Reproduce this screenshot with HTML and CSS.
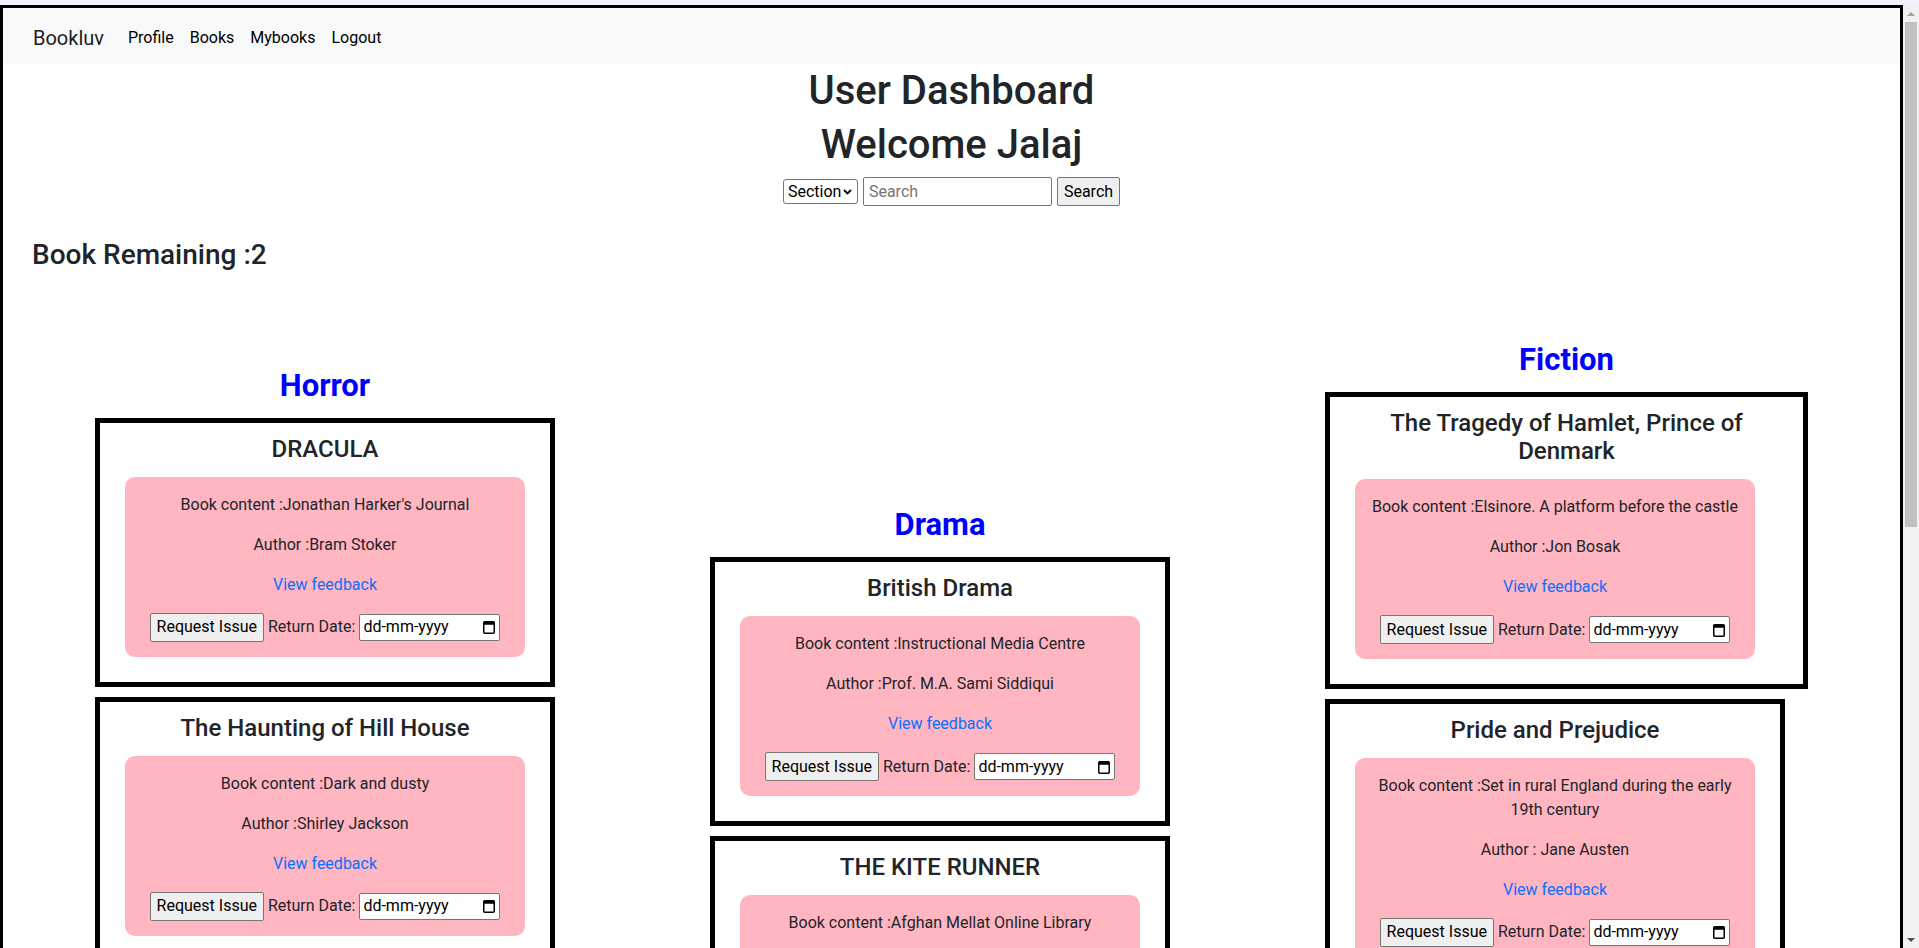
FILE: index.html
```html
<!DOCTYPE html>
<html lang="en">
<head>
<meta charset="utf-8">
<title>User Dashboard</title>
<link rel="stylesheet" href="styles.css">
</head>
<body>
<nav class="navbar">
  <a class="brand" href="#">Bookluv</a>
  <ul class="nav-links">
    <li><a href="#">Profile</a></li>
    <li><a href="#">Books</a></li>
    <li><a href="#">Mybooks</a></li>
    <li><a href="#">Logout</a></li>
  </ul>
</nav>

<header class="dash-head">
  <h1 class="dash-title">User Dashboard</h1>
  <h1 class="dash-welcome">Welcome Jalaj</h1>
  <form class="search">
    <select class="search-select"><option>Section</option><option>Title</option><option>Author</option></select>
    <input class="search-input" type="text" placeholder="Search">
    <button class="btn" type="button">Search</button>
  </form>
</header>

<h3 class="remaining">Book Remaining :2</h3>

<div class="sections">
  <section class="col">
    <h2 class="col-title">Horror</h2>
    <div class="card">
      <h4 class="card-title">DRACULA</h4>
      <div class="info">
        <p>Book content :Jonathan Harker's Journal</p>
        <p>Author :Bram Stoker</p>
        <p><a class="link" href="#">View feedback</a></p>
        <div class="issue"><button class="btn" type="button">Request Issue</button><span class="lbl">Return Date:</span><span class="date"><span>dd-mm-yyyy</span><svg class="cal" width="12" height="14" viewBox="0 0 12 14" aria-hidden="true"><rect x="0.75" y="1.75" width="10.5" height="11.5" rx="1" fill="none" stroke="#000" stroke-width="1.5"/><rect x="0.75" y="1.75" width="10.5" height="3" fill="#000"/></svg></span></div>
      </div>
    </div>
    <div class="card">
      <h4 class="card-title">The Haunting of Hill House</h4>
      <div class="info">
        <p>Book content :Dark and dusty</p>
        <p>Author :Shirley Jackson</p>
        <p><a class="link" href="#">View feedback</a></p>
        <div class="issue"><button class="btn" type="button">Request Issue</button><span class="lbl">Return Date:</span><span class="date"><span>dd-mm-yyyy</span><svg class="cal" width="12" height="14" viewBox="0 0 12 14" aria-hidden="true"><rect x="0.75" y="1.75" width="10.5" height="11.5" rx="1" fill="none" stroke="#000" stroke-width="1.5"/><rect x="0.75" y="1.75" width="10.5" height="3" fill="#000"/></svg></span></div>
      </div>
    </div>
    <div class="card">
      <h4 class="card-title">FRANKENSTEIN</h4>
      <div class="info">
        <p>Book content :Letters to Mrs. Saville</p>
        <p>Author :Mary Shelley</p>
        <p><a class="link" href="#">View feedback</a></p>
        <div class="issue"><button class="btn" type="button">Request Issue</button><span class="lbl">Return Date:</span><span class="date"><span>dd-mm-yyyy</span><svg class="cal" width="12" height="14" viewBox="0 0 12 14" aria-hidden="true"><rect x="0.75" y="1.75" width="10.5" height="11.5" rx="1" fill="none" stroke="#000" stroke-width="1.5"/><rect x="0.75" y="1.75" width="10.5" height="3" fill="#000"/></svg></span></div>
      </div>
    </div>
    <div class="card">
      <h4 class="card-title">The Shining</h4>
      <div class="info">
        <p>Book content :The Overlook Hotel</p>
        <p>Author :Stephen King</p>
        <p><a class="link" href="#">View feedback</a></p>
        <div class="issue"><button class="btn" type="button">Request Issue</button><span class="lbl">Return Date:</span><span class="date"><span>dd-mm-yyyy</span><svg class="cal" width="12" height="14" viewBox="0 0 12 14" aria-hidden="true"><rect x="0.75" y="1.75" width="10.5" height="11.5" rx="1" fill="none" stroke="#000" stroke-width="1.5"/><rect x="0.75" y="1.75" width="10.5" height="3" fill="#000"/></svg></span></div>
      </div>
    </div>
  </section>

  <section class="col">
    <h2 class="col-title">Drama</h2>
    <div class="card">
      <h4 class="card-title">British Drama</h4>
      <div class="info">
        <p>Book content :Instructional Media Centre</p>
        <p>Author :Prof. M.A. Sami Siddiqui</p>
        <p><a class="link" href="#">View feedback</a></p>
        <div class="issue"><button class="btn" type="button">Request Issue</button><span class="lbl">Return Date:</span><span class="date"><span>dd-mm-yyyy</span><svg class="cal" width="12" height="14" viewBox="0 0 12 14" aria-hidden="true"><rect x="0.75" y="1.75" width="10.5" height="11.5" rx="1" fill="none" stroke="#000" stroke-width="1.5"/><rect x="0.75" y="1.75" width="10.5" height="3" fill="#000"/></svg></span></div>
      </div>
    </div>
    <div class="card">
      <h4 class="card-title">THE KITE RUNNER</h4>
      <div class="info">
        <p>Book content :Afghan Mellat Online Library</p>
        <p>Author :Khaled Hosseini</p>
        <p><a class="link" href="#">View feedback</a></p>
        <div class="issue"><button class="btn" type="button">Request Issue</button><span class="lbl">Return Date:</span><span class="date"><span>dd-mm-yyyy</span><svg class="cal" width="12" height="14" viewBox="0 0 12 14" aria-hidden="true"><rect x="0.75" y="1.75" width="10.5" height="11.5" rx="1" fill="none" stroke="#000" stroke-width="1.5"/><rect x="0.75" y="1.75" width="10.5" height="3" fill="#000"/></svg></span></div>
      </div>
    </div>
    <div class="card">
      <h4 class="card-title">Death of a Salesman</h4>
      <div class="info">
        <p>Book content :Certain private conversations</p>
        <p>Author :Arthur Miller</p>
        <p><a class="link" href="#">View feedback</a></p>
        <div class="issue"><button class="btn" type="button">Request Issue</button><span class="lbl">Return Date:</span><span class="date"><span>dd-mm-yyyy</span><svg class="cal" width="12" height="14" viewBox="0 0 12 14" aria-hidden="true"><rect x="0.75" y="1.75" width="10.5" height="11.5" rx="1" fill="none" stroke="#000" stroke-width="1.5"/><rect x="0.75" y="1.75" width="10.5" height="3" fill="#000"/></svg></span></div>
      </div>
    </div>
  </section>

  <section class="col">
    <h2 class="col-title">Fiction</h2>
    <div class="card">
      <h4 class="card-title">The Tragedy of Hamlet, Prince of Denmark</h4>
      <div class="info">
        <p>Book content :Elsinore. A platform before the castle</p>
        <p>Author :Jon Bosak</p>
        <p><a class="link" href="#">View feedback</a></p>
        <div class="issue"><button class="btn" type="button">Request Issue</button><span class="lbl">Return Date:</span><span class="date"><span>dd-mm-yyyy</span><svg class="cal" width="12" height="14" viewBox="0 0 12 14" aria-hidden="true"><rect x="0.75" y="1.75" width="10.5" height="11.5" rx="1" fill="none" stroke="#000" stroke-width="1.5"/><rect x="0.75" y="1.75" width="10.5" height="3" fill="#000"/></svg></span></div>
      </div>
    </div>
    <div class="card">
      <h4 class="card-title">Pride and Prejudice</h4>
      <div class="info">
        <p>Book content :Set in rural England during the early 19th century</p>
        <p>Author : Jane Austen</p>
        <p><a class="link" href="#">View feedback</a></p>
        <div class="issue"><button class="btn" type="button">Request Issue</button><span class="lbl">Return Date:</span><span class="date"><span>dd-mm-yyyy</span><svg class="cal" width="12" height="14" viewBox="0 0 12 14" aria-hidden="true"><rect x="0.75" y="1.75" width="10.5" height="11.5" rx="1" fill="none" stroke="#000" stroke-width="1.5"/><rect x="0.75" y="1.75" width="10.5" height="3" fill="#000"/></svg></span></div>
      </div>
    </div>
    <div class="card">
      <h4 class="card-title">The Great Gatsby</h4>
      <div class="info">
        <p>Book content :West Egg, Long Island</p>
        <p>Author :F. Scott Fitzgerald</p>
        <p><a class="link" href="#">View feedback</a></p>
        <div class="issue"><button class="btn" type="button">Request Issue</button><span class="lbl">Return Date:</span><span class="date"><span>dd-mm-yyyy</span><svg class="cal" width="12" height="14" viewBox="0 0 12 14" aria-hidden="true"><rect x="0.75" y="1.75" width="10.5" height="11.5" rx="1" fill="none" stroke="#000" stroke-width="1.5"/><rect x="0.75" y="1.75" width="10.5" height="3" fill="#000"/></svg></span></div>
      </div>
    </div>
    <div class="card">
      <h4 class="card-title">Nineteen Eighty-Four</h4>
      <div class="info">
        <p>Book content :Airstrip One, Oceania</p>
        <p>Author :George Orwell</p>
        <p><a class="link" href="#">View feedback</a></p>
        <div class="issue"><button class="btn" type="button">Request Issue</button><span class="lbl">Return Date:</span><span class="date"><span>dd-mm-yyyy</span><svg class="cal" width="12" height="14" viewBox="0 0 12 14" aria-hidden="true"><rect x="0.75" y="1.75" width="10.5" height="11.5" rx="1" fill="none" stroke="#000" stroke-width="1.5"/><rect x="0.75" y="1.75" width="10.5" height="3" fill="#000"/></svg></span></div>
      </div>
    </div>
  </section>
</div>

<div class="scrollbar" aria-hidden="true">
  <span class="sb-up"></span>
  <span class="sb-thumb"></span>
  <span class="sb-down"></span>
</div>
</body>
</html>
```

FILE: styles.css
```css
html {
  background: #f3f1fa;
}

body {
  width: 1897px;
  margin: 5px 0 0;
  border: 3px solid #000;
  background: #fff;
  font-family: Roboto, "Liberation Sans", Arial, sans-serif;
  font-size: 16px;
  line-height: 1.5;
  color: #212529;
  padding-bottom: 110px;
}

/* ---------- window scrollbar (as seen in the reference) ---------- */
.scrollbar {
  position: fixed;
  top: 5px;
  right: 0;
  bottom: 0;
  width: 16px;
  background: #f1f1f1;
  display: flex;
  flex-direction: column;
  align-items: center;
}

.sb-up {
  margin-top: 7px;
  width: 0;
  height: 0;
  border-left: 4px solid transparent;
  border-right: 4px solid transparent;
  border-bottom: 4px solid #a3a3a3;
}

.sb-thumb {
  margin-top: 6px;
  width: 12px;
  height: 505px;
  background: #c1c1c1;
}

.sb-down {
  margin-top: auto;
  margin-bottom: 6px;
  width: 0;
  height: 0;
  border-left: 4px solid transparent;
  border-right: 4px solid transparent;
  border-top: 4px solid #505050;
}

/* ---------- navbar ---------- */
.navbar {
  box-sizing: border-box;
  display: flex;
  align-items: center;
  height: 56px;
  padding: 4px 30px 0;
  background: #f8f9fa;
}

.brand {
  font-size: 20px;
  line-height: 30px;
  color: #1c1c1c;
  text-decoration: none;
  margin-right: 16px;
}

.nav-links {
  display: flex;
  list-style: none;
  margin: 0;
  padding: 0;
}

.nav-links a {
  display: block;
  padding: 0 8px;
  color: #000;
  text-decoration: none;
  font-size: 16px;
  line-height: 24px;
}

/* ---------- header ---------- */
.dash-head {
  text-align: center;
  padding-top: 3px;
}

.dash-title,
.dash-welcome {
  font-size: 40px;
  font-weight: 500;
  line-height: 1.2;
  margin: 0;
}

.dash-title {
  margin-bottom: 6px;
}

.dash-welcome {
  margin-bottom: 8px;
}

.search {
  display: flex;
  justify-content: center;
  align-items: center;
  gap: 5px;
  margin: 0 0 32px;
}

.search-select {
  -webkit-appearance: none;
  appearance: none;
  box-sizing: border-box;
  width: 75px;
  height: 25px;
  font-family: inherit;
  font-size: 16px;
  line-height: 21px;
  color: #000;
  border: 1px solid #767676;
  border-radius: 3px;
  padding: 0 16px 0 4px;
  background: #fff url("data:image/svg+xml;utf8,<svg xmlns='http://www.w3.org/2000/svg' width='9' height='6' viewBox='0 0 9 6'><path d='M1 1l3.5 3.5L8 1' fill='none' stroke='%23000' stroke-width='1.8'/></svg>") no-repeat right 5px center;
}

.search-input {
  box-sizing: border-box;
  width: 189px;
  height: 29px;
  font-family: inherit;
  font-size: 16px;
  color: #000;
  border: 1px solid #767676;
  border-radius: 2px;
  padding: 1px 5px;
}

.search-input::placeholder {
  color: #757575;
}

.btn {
  box-sizing: border-box;
  height: 29px;
  font-family: inherit;
  font-size: 16px;
  line-height: 1.5;
  color: #000;
  background: #efefef;
  border: 1px solid #767676;
  border-radius: 2px;
  padding: 1px 6px;
}

.remaining {
  font-size: 28px;
  font-weight: 500;
  line-height: 1.2;
  margin: 0 0 8px;
  padding-left: 29px;
}

/* ---------- sections ---------- */
.sections {
  display: flex;
  align-items: center;
  padding: 0 14.5px;
  margin-top: 69px;
}

.col {
  margin: 0 77.5px;
  display: flex;
  flex-direction: column;
  align-items: flex-start;
}

.col-title {
  align-self: stretch;
  text-align: center;
  font-size: 31px;
  font-weight: 700;
  line-height: 38px;
  color: #0000ff;
  margin: 0 0 8px;
}

.card {
  box-sizing: border-box;
  border: 5px solid #000;
  background: #fff;
  padding: 12px 25px 25px;
  margin: 5px 0;
  text-align: center;
}

.card-title {
  font-size: 24px;
  font-weight: 500;
  line-height: 1.2;
  margin: 0 0 13px;
}

.info {
  box-sizing: border-box;
  width: 400px;
  background: #ffb6c1;
  border-radius: 10px;
  padding: 16px 10px 15px;
}

.info p {
  margin: 0 0 16px;
}

.link {
  color: #0d6efd;
  text-decoration: none;
}

.issue {
  display: flex;
  justify-content: center;
  align-items: center;
  gap: 4px;
  height: 29px;
}

.lbl {
  white-space: nowrap;
}

.date {
  box-sizing: border-box;
  display: inline-flex;
  align-items: center;
  justify-content: space-between;
  width: 141px;
  height: 27px;
  border: 1px solid #767676;
  border-radius: 2px;
  background: #fff;
  color: #000;
  padding: 0 4px 0 3px;
  text-align: left;
}

.cal {
  flex: none;
}
```
